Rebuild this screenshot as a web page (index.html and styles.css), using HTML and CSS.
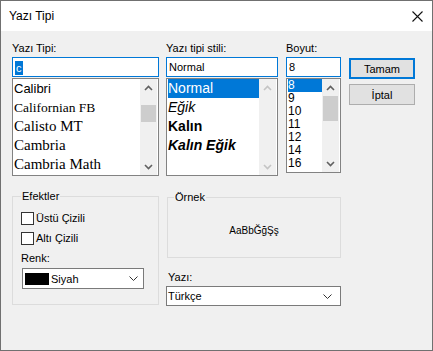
FILE: index.html
```html
<!DOCTYPE html>
<html lang="tr">
<head>
    <meta charset="UTF-8">
    <meta name="viewport" content="width=device-width, initial-scale=1.0">
    <title>Yazı Tipi</title>
    <link rel="stylesheet" href="styles.css">
</head>
<body>
    <div class="dialog">
        <div class="titlebar">
            <span class="title">Yazı Tipi</span>
            <svg class="close" width="11" height="11" viewBox="0 0 11 11">
                <path d="M0.5 0.5 L10.5 10.5 M10.5 0.5 L0.5 10.5" stroke="#111" stroke-width="1.1" fill="none"/>
            </svg>
        </div>

        <div class="content">
            <div class="top-row">
                <!-- Font family -->
                <div class="col col-font">
                    <label class="field-label">Yazı Tipi:</label>
                    <div class="textbox"><span class="sel">c</span></div>
                    <div class="listbox list-font">
                        <ul class="items">
                            <li class="f-sans">Calibri</li>
                            <li class="f-serif f-narrow">Californian FB</li>
                            <li class="f-serif">Calisto MT</li>
                            <li class="f-serif">Cambria</li>
                            <li class="f-serif">Cambria Math</li>
                        </ul>
                        <div class="scrollbar">
                            <div class="sb-btn"><svg width="9" height="6" viewBox="0 0 9 6"><polyline points="1,5 4.5,1.5 8,5" fill="none" stroke="#606060" stroke-width="1.6"/></svg></div>
                            <div class="sb-track"><div class="sb-thumb thumb-font"></div></div>
                            <div class="sb-btn"><svg width="9" height="6" viewBox="0 0 9 6"><polyline points="1,1 4.5,4.5 8,1" fill="none" stroke="#606060" stroke-width="1.6"/></svg></div>
                        </div>
                    </div>
                </div>

                <!-- Style -->
                <div class="col col-style">
                    <label class="field-label">Yazı tipi stili:</label>
                    <div class="textbox">Normal</div>
                    <div class="listbox list-style">
                        <ul class="items">
                            <li class="selected">Normal</li>
                            <li class="italic">Eğik</li>
                            <li class="bold">Kalın</li>
                            <li class="bold italic">Kalın Eğik</li>
                        </ul>
                        <div class="scrollbar">
                            <div class="sb-btn"><svg width="9" height="6" viewBox="0 0 9 6"><polyline points="1,5 4.5,1.5 8,5" fill="none" stroke="#c4c4c4" stroke-width="1.6"/></svg></div>
                            <div class="sb-track"></div>
                            <div class="sb-btn"><svg width="9" height="6" viewBox="0 0 9 6"><polyline points="1,1 4.5,4.5 8,1" fill="none" stroke="#c4c4c4" stroke-width="1.6"/></svg></div>
                        </div>
                    </div>
                </div>

                <!-- Size -->
                <div class="col col-size">
                    <label class="field-label">Boyut:</label>
                    <div class="textbox">8</div>
                    <div class="listbox list-size">
                        <ul class="items">
                            <li class="selected">8</li>
                            <li>9</li>
                            <li>10</li>
                            <li>11</li>
                            <li>12</li>
                            <li>14</li>
                            <li>16</li>
                        </ul>
                        <div class="scrollbar">
                            <div class="sb-btn"><svg width="9" height="6" viewBox="0 0 9 6"><polyline points="1,5 4.5,1.5 8,5" fill="none" stroke="#606060" stroke-width="1.6"/></svg></div>
                            <div class="sb-track"><div class="sb-thumb thumb-size"></div></div>
                            <div class="sb-btn"><svg width="9" height="6" viewBox="0 0 9 6"><polyline points="1,1 4.5,4.5 8,1" fill="none" stroke="#606060" stroke-width="1.6"/></svg></div>
                        </div>
                    </div>
                </div>

                <div class="buttons">
                    <button class="btn btn-default">Tamam</button>
                    <button class="btn">İptal</button>
                </div>
            </div>

            <div class="bottom-row">
                <fieldset class="group group-effects">
                    <legend>Efektler</legend>
                    <div class="check-row"><span class="checkbox"></span>Üstü Çizili</div>
                    <div class="check-row"><span class="checkbox"></span>Altı Çizili</div>
                    <div class="field-label renk">Renk:</div>
                    <div class="combo combo-color">
                        <span class="swatch"></span>
                        <span class="combo-text">Siyah</span>
                        <svg class="chev" width="9" height="5" viewBox="0 0 9 5"><polyline points="0.5,0.5 4.5,4.5 8.5,0.5" fill="none" stroke="#333" stroke-width="1"/></svg>
                    </div>
                </fieldset>

                <div class="right-col">
                    <fieldset class="group group-sample">
                        <legend>Örnek</legend>
                        <div class="sample">AaBbĞğŞş</div>
                    </fieldset>
                    <div class="field-label script-label">Yazı:</div>
                    <div class="combo combo-script">
                        <span class="combo-text">Türkçe</span>
                        <svg class="chev" width="9" height="5" viewBox="0 0 9 5"><polyline points="0.5,0.5 4.5,4.5 8.5,0.5" fill="none" stroke="#333" stroke-width="1"/></svg>
                    </div>
                </div>
            </div>
        </div>
    </div>
</body>
</html>
```

FILE: styles.css
```css
/* General Reset */
* {
    margin: 0;
    padding: 0;
    box-sizing: border-box;
}

body {
    font-family: 'Liberation Sans', Arial, sans-serif;
    font-size: 11px;
    color: #000;
    background-color: #f0f0f0;
}

/* Dialog frame */
.dialog {
    width: 433px;
    height: 351px;
    border: 1px solid #707070;
    background-color: #f0f0f0;
    display: flex;
    flex-direction: column;
}

.titlebar {
    height: 30px;
    background-color: #fff;
    display: flex;
    align-items: center;
    justify-content: space-between;
    padding: 0 9px 0 8px;
    flex-shrink: 0;
}

.title {
    font-size: 12px;
}

.content {
    padding: 10px 0 0 11px;
}

/* Top row */
.top-row {
    display: flex;
    align-items: flex-start;
}

.col-font {
    width: 147px;
    margin-right: 7px;
}

.col-style {
    width: 112px;
    margin-right: 8px;
}

.col-size {
    width: 55px;
    margin-right: 8px;
}

.field-label {
    display: block;
    height: 14px;
    line-height: 14px;
    margin-bottom: 2px;
    white-space: nowrap;
}

.textbox {
    height: 20px;
    border: 1px solid #0078d7;
    background-color: #fff;
    padding: 0 2px;
    line-height: 18px;
    white-space: nowrap;
}

.sel {
    display: inline-block;
    background-color: #0078d7;
    color: #fff;
    line-height: 14px;
    padding: 0 1px;
    vertical-align: middle;
}

/* List boxes */
.listbox {
    margin-top: 1px;
    border: 1px solid #828282;
    background-color: #fff;
    display: flex;
    padding: 0 1px;
}

.list-font,
.list-style {
    height: 98px;
}

.list-size {
    height: 95px;
}

.items {
    flex: 1;
    list-style: none;
    overflow: hidden;
    min-width: 0;
}

.items li {
    white-space: nowrap;
}

.list-font li {
    height: 19px;
    line-height: 19px;
}

.f-sans {
    font-family: 'Liberation Sans', Arial, sans-serif;
    font-size: 13px;
}

.f-serif {
    font-family: 'Liberation Serif', 'Times New Roman', serif;
    font-size: 15px;
}

.f-narrow {
    font-size: 13.5px;
}

.list-style li {
    height: 19px;
    line-height: 19px;
    font-size: 14px;
}

.list-style .bold {
    font-weight: bold;
}

.list-style .italic {
    font-style: italic;
}

.list-size li {
    height: 13px;
    line-height: 13px;
    font-size: 12px;
}

.items li.selected {
    background-color: #0078d7;
    color: #fff;
}

/* Scrollbar */
.scrollbar {
    width: 17px;
    display: flex;
    flex-direction: column;
    background-color: #f0f0f0;
    flex-shrink: 0;
}

.sb-btn {
    height: 17px;
    display: flex;
    align-items: center;
    justify-content: center;
    flex-shrink: 0;
}

.sb-track {
    flex: 1;
}

.sb-thumb {
    margin: 0 1px;
    background-color: #cdcdcd;
}

.thumb-font {
    margin-top: 9px;
    height: 17px;
}

.thumb-size {
    height: 25px;
}

/* Buttons */
.buttons {
    width: 66px;
    padding-top: 17px;
    display: flex;
    flex-direction: column;
    gap: 5px;
}

.btn {
    height: 21px;
    border: 1px solid #adadad;
    background-color: #e1e1e1;
    font-family: 'Liberation Sans', Arial, sans-serif;
    font-size: 11px;
    color: #000;
}

.btn-default {
    border: 2px solid #0078d7;
}

/* Bottom row */
.bottom-row {
    display: flex;
    align-items: flex-start;
    margin-top: 13px;
}

.group {
    border: 1px solid #dcdcdc;
    min-width: 0;
    margin: 0;
}

.group legend {
    padding: 0 1px;
    line-height: 14px;
    font-size: 11px;
}

.group-effects {
    width: 147px;
    margin-right: 7px;
    padding: 5px 8px 15px 8px;
}

.check-row {
    height: 20px;
    display: flex;
    align-items: center;
}

.checkbox {
    width: 13px;
    height: 13px;
    border: 1px solid #333;
    background-color: #fff;
    margin-right: 2px;
}

.renk {
    margin-top: 3px;
    margin-bottom: 3px;
}

.combo {
    display: flex;
    align-items: center;
    border: 1px solid #7a7a7a;
    background-color: #fff;
}

.combo-color {
    width: 122px;
    height: 21px;
    margin-left: 1px;
    padding: 0 5px 0 2px;
}

.swatch {
    width: 24px;
    height: 12px;
    background-color: #000;
    margin-right: 2px;
}

.chev {
    margin-left: auto;
}

.right-col {
    width: 175px;
    margin-top: 1px;
}

.group-sample {
    margin-left: 1px;
    width: 174px;
    padding: 0 6px;
}

.sample {
    height: 53px;
    display: flex;
    align-items: center;
    justify-content: center;
    font-size: 10px;
}

.script-label {
    margin-top: 12px;
    margin-left: 2px;
}

.combo-script {
    height: 20px;
    padding: 0 8px 0 1px;
}
```
